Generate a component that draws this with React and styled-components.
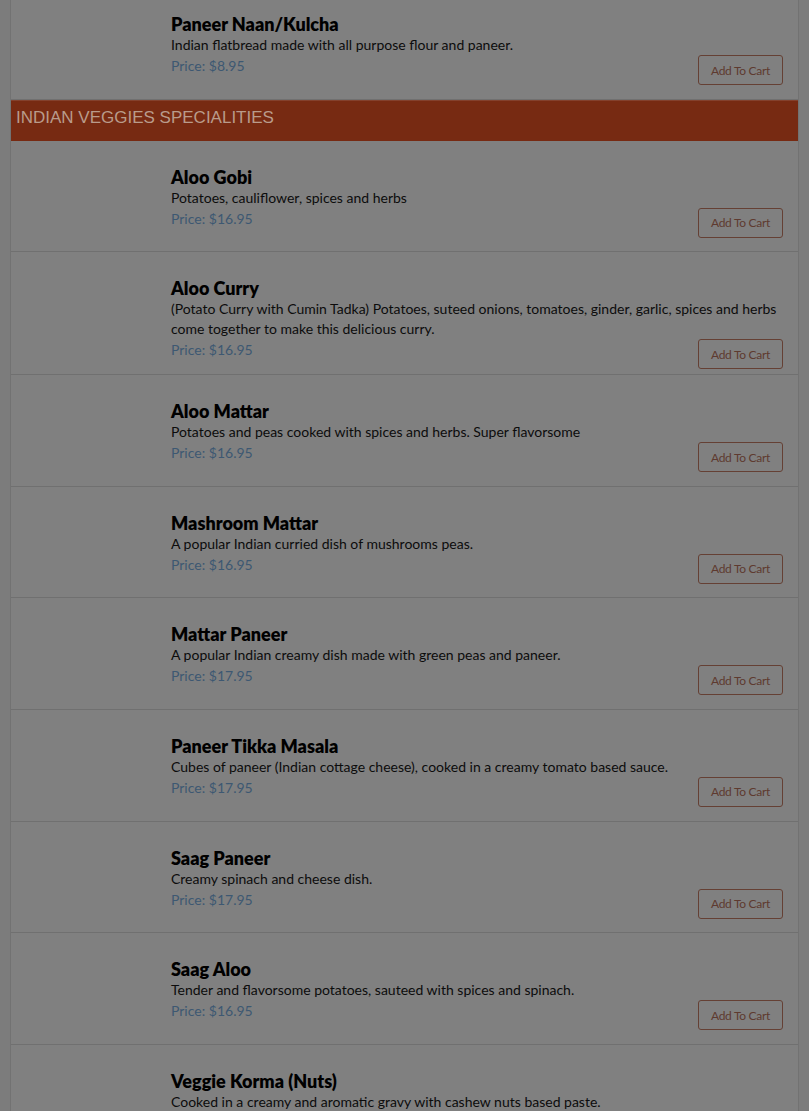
import styled, { createGlobalStyle } from 'styled-components';

const GlobalStyle = createGlobalStyle`
    html, body {
        margin: 0;
        padding: 0;
        background: #7c7c7c;
    }
    * {
        box-sizing: border-box;
    }
`;

const Page = styled.div`
    height: 1111px;
    overflow: hidden;
`;

const Menu = styled.section`
    margin: -12px 10px 0 10px;
    background: #808080;
    border-left: 1px solid #727272;
    border-right: 1px solid #727272;
    font-family: Lato, "Noto Sans", sans-serif;
`;

const SectionTitle = styled.h2`
    margin: 0;
    height: 41px;
    padding: 7px 5px 0 5px;
    background: #772a12;
    color: #b99b8b;
    font-family: "Liberation Sans", Arial, sans-serif;
    font-size: 17px;
    font-weight: 400;
    line-height: 1.15;
    text-transform: uppercase;
    border-top: 1px solid #84412d;
`;

const Item = styled.article`
    display: flex;
    min-height: 111.6px;
    border-bottom: 1px solid #707070;
`;

const Thumb = styled.div`
    width: 160px;
    flex-shrink: 0;
`;

const Body = styled.div`
    flex: 1;
    padding: 25px 15px 5px 0;
`;

const Name = styled.h3`
    margin: 0;
    font-size: 18px;
    font-weight: 800;
    line-height: 22px;
    color: #000;
`;

const Desc = styled.p`
    margin: 0;
    font-size: 14px;
    line-height: 20px;
    color: #0c0c0c;
`;

const PriceRow = styled.div`
    display: flex;
    justify-content: space-between;
    align-items: flex-start;
`;

const Price = styled.span`
    font-size: 14px;
    line-height: 21px;
    color: #3d5872;
`;

const CartButton = styled.button`
    width: 85px;
    height: 30px;
    padding: 0;
    background: transparent;
    border: 1px solid #654034;
    border-radius: 3px;
    color: #5e3a2f;
    font-family: Lato, "Noto Sans", sans-serif;
    font-size: 12px;
    letter-spacing: -0.3px;
    cursor: pointer;
`;

const menu = [
    {
        items: [
            { name: 'Paneer Naan/Kulcha', desc: 'Indian flatbread made with all purpose flour and paneer.', price: '8.95' },
        ],
    },
    {
        title: 'Indian Veggies Specialities',
        items: [
            { name: 'Aloo Gobi', desc: 'Potatoes, cauliflower, spices and herbs', price: '16.95' },
            { name: 'Aloo Curry', desc: '(Potato Curry with Cumin Tadka) Potatoes, suteed onions, tomatoes, ginder, garlic, spices and herbs come together to make this delicious curry.', price: '16.95' },
            { name: 'Aloo Mattar', desc: 'Potatoes and peas cooked with spices and herbs. Super flavorsome', price: '16.95' },
            { name: 'Mashroom Mattar', desc: 'A popular Indian curried dish of mushrooms peas.', price: '16.95' },
            { name: 'Mattar Paneer', desc: 'A popular Indian creamy dish made with green peas and paneer.', price: '17.95' },
            { name: 'Paneer Tikka Masala', desc: 'Cubes of paneer (Indian cottage cheese), cooked in a creamy tomato based sauce.', price: '17.95' },
            { name: 'Saag Paneer', desc: 'Creamy spinach and cheese dish.', price: '17.95' },
            { name: 'Saag Aloo', desc: 'Tender and flavorsome potatoes, sauteed with spices and spinach.', price: '16.95' },
            { name: 'Veggie Korma (Nuts)', desc: 'Cooked in a creamy and aromatic gravy with cashew nuts based paste.', price: '16.95' },
        ],
    },
];

const MenuItem = ({ item }) => (
    <Item>
        <Thumb />
        <Body>
            <Name>{item.name}</Name>
            <Desc>{item.desc}</Desc>
            <PriceRow>
                <Price>Price: ${item.price}</Price>
                <CartButton>Add To Cart</CartButton>
            </PriceRow>
        </Body>
    </Item>
);

const App = () => {
    return (
        <Page>
            <GlobalStyle />
            <Menu>
                {menu.map((section, i) => (
                    <div key={i}>
                        {section.title && <SectionTitle>{section.title}</SectionTitle>}
                        {section.items.map((item) => (
                            <MenuItem key={item.name} item={item} />
                        ))}
                    </div>
                ))}
            </Menu>
        </Page>
    );
};

export default App;
